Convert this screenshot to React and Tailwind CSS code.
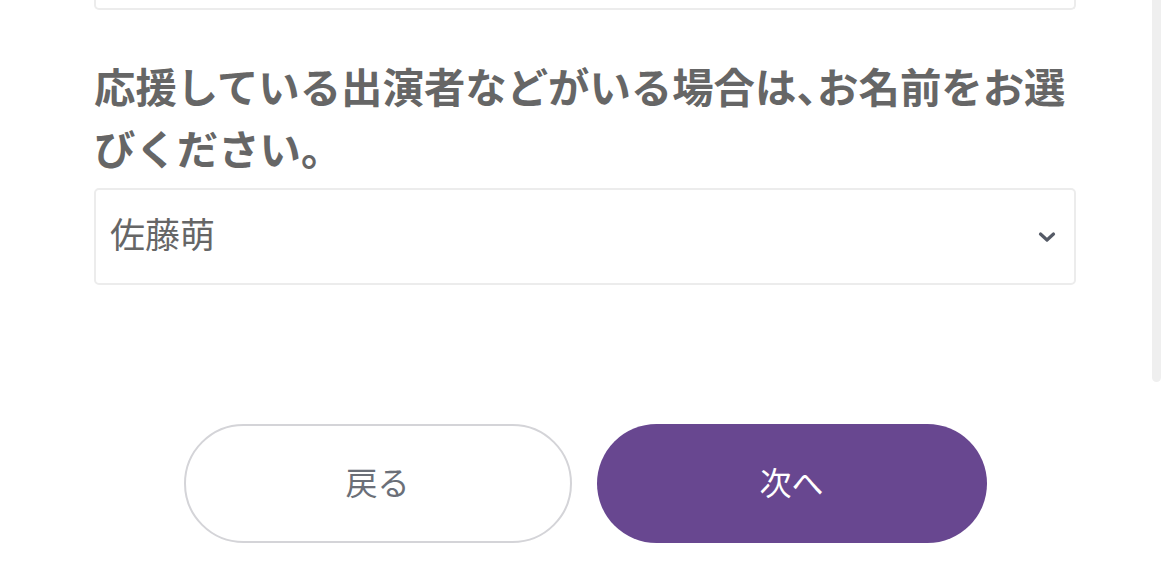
export default function App() {
  return (
    <div
      className="relative h-[588px] w-[1170px] overflow-hidden bg-white"
      style={{ fontFamily: '"Noto Sans CJK JP", "Noto Sans", sans-serif' }}
    >
      {/* Scrollbar */}
      <div className="absolute right-[9px] top-0 h-[382px] w-[9px] rounded-b-full bg-[#efefef]" />

      <div className="px-[94px]">
        {/* Previous field (cut off) */}
        <div className="h-[10px] rounded-b-[5px] border-2 border-t-0 border-[#ececec]" />

        {/* Question */}
        <h2 className="mt-[44px] text-[41.4px] font-bold leading-[62px] text-[#666666]">
          応援している出演者などがいる場合は
          <span className="[font-feature-settings:'halt']">、</span>
          お名前をお選びください。
        </h2>

        {/* Select */}
        <div className="mt-[10px] flex h-[97px] items-center justify-between rounded-[5px] border-2 border-[#ececec] pl-[14px] pr-[18px]">
          <span className="pb-[6px] text-[35px] text-[#666666]">佐藤萌</span>
          <svg width="18" height="12" viewBox="0 0 18 12" fill="none">
            <path
              d="M2.5 3 L9 9 L15.5 3"
              stroke="#555a66"
              strokeWidth="3.2"
              strokeLinecap="round"
              strokeLinejoin="round"
            />
          </svg>
        </div>
      </div>

      {/* Buttons */}
      <div className="mt-[139px] flex justify-center gap-[25px]">
        <button className="flex h-[119px] w-[388px] items-center justify-center rounded-full border-2 border-[#d4d4d8] bg-white pb-[6px] text-[32px] text-[#6b6f78]">
          戻る
        </button>
        <button className="flex h-[119px] w-[390px] items-center justify-center rounded-full bg-[#684790] pb-[6px] text-[32px] text-white">
          次へ
        </button>
      </div>
    </div>
  );
}
